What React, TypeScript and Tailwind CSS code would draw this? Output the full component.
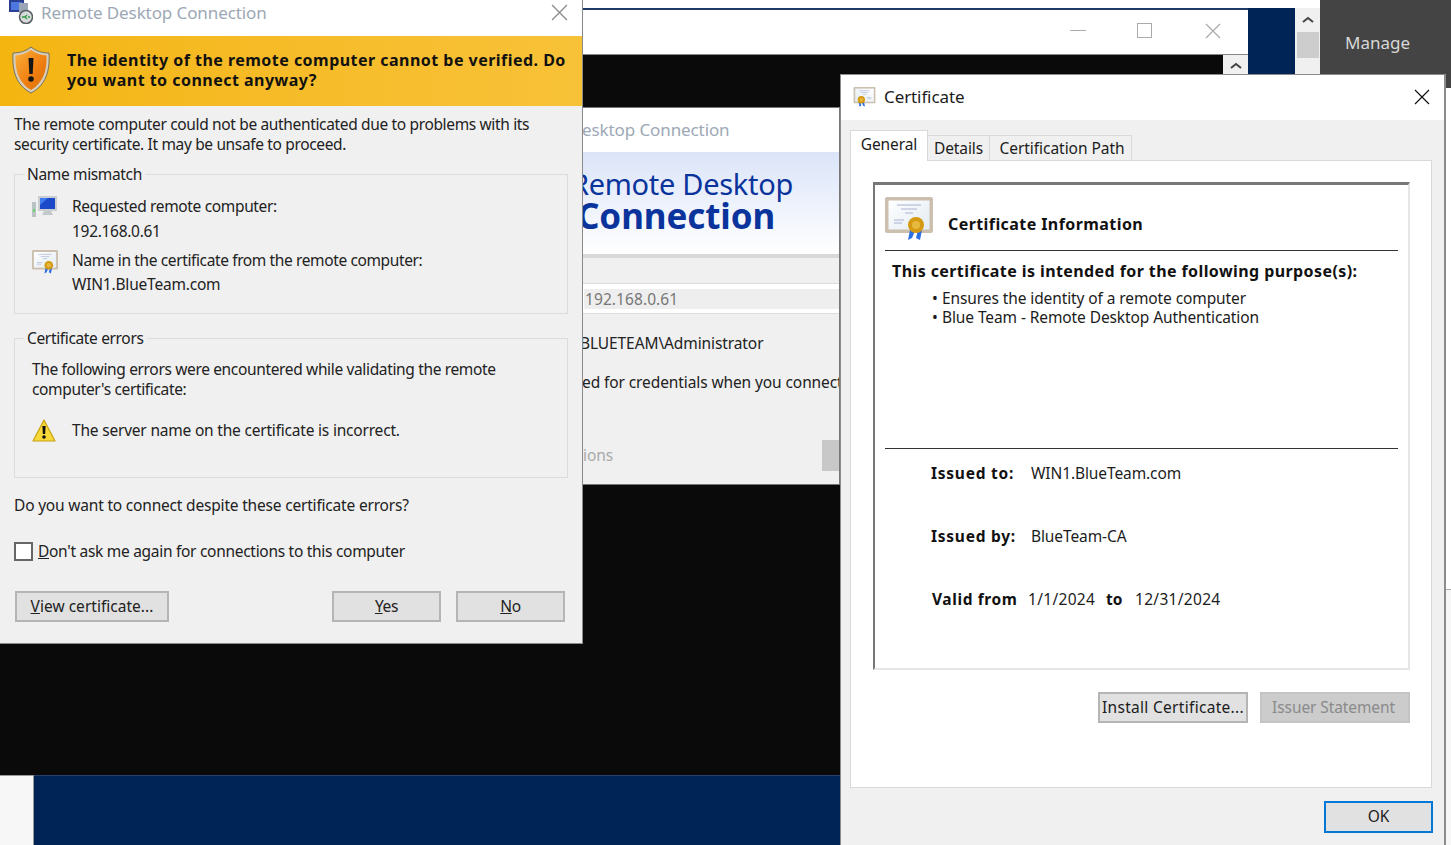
const FONT = "font-['Noto_Sans',sans-serif]";

function RdpIcon() {
  return (
    <svg viewBox="0 0 26 22" className="w-[26px] h-[22px]">
      <rect x="0" y="6" width="4" height="15" fill="#b9c2c4" />
      <rect x="1" y="13" width="2" height="3" fill="#6fd36f" />
      <rect x="6" y="0" width="19" height="15" fill="#c9ced2" />
      <rect x="8" y="2" width="15" height="11" fill="#1c49c9" />
      <path d="M8 2h8l-8 7z" fill="#3f7cf0" />
      <path d="M12 15h7l2 4H10z" fill="#c3c8cb" />
    </svg>
  );
}

function RdpTitleIcon() {
  return (
    <svg viewBox="0 0 24 24" className="w-[24px] h-[24px]">
      <rect x="0" y="0" width="15" height="12" fill="#2a3f8f" />
      <rect x="2" y="2" width="11" height="8" fill="#4d78e0" />
      <rect x="10" y="3" width="9" height="10" fill="#9aa6b8" />
      <circle cx="17" cy="17" r="6.5" fill="#d7dadb" stroke="#5a5f62" strokeWidth="1.5" />
      <path d="M13 17h3M18 15l-2 2 2 2M21 17h-2" stroke="#2d9b3f" strokeWidth="1.4" fill="none" />
    </svg>
  );
}

function CertIcon({ className, id }: { className: string; id: string }) {
  return (
    <svg viewBox="0 0 48 44" className={className}>
      <defs>
        <linearGradient id={id} x1="0" y1="0" x2="1" y2="1">
          <stop offset="0" stopColor="#ffffff" />
          <stop offset="1" stopColor="#e3ebf3" />
        </linearGradient>
      </defs>
      <rect x="0" y="0" width="48" height="36" rx="2" fill="#cbbfae" />
      <rect x="3.500" y="3.500" width="41" height="29" fill={`url(#${id})`} />
      <path d="M12 8h24M16 12h16M20 16h8M9 23h10M9 26h8" stroke="#a7b2cf" strokeWidth="1.2" />
      <path d="M25 33l-2 10 4-2 3-7zM33 33l-2 8 4 2 2-10z" fill="#2c6fe0" />
      <circle cx="31" cy="28" r="8" fill="#d49a12" />
      <circle cx="31" cy="28" r="4" fill="#e8b93f" />
    </svg>
  );
}

function ShieldIcon() {
  return (
    <svg viewBox="0 0 38 48" className="w-[38px] h-[48px]">
      <defs>
        <linearGradient id="shield" x1="0" y1="0" x2="1" y2="1">
          <stop offset="0" stopColor="#fbb03a" />
          <stop offset="0.6" stopColor="#ee7d0f" />
          <stop offset="1" stopColor="#d96f0a" />
        </linearGradient>
      </defs>
      <path d="M19 1c5 4 11 6 18 6 1 18-3 32-18 40C4 39 0 25 1 7c7 0 13-2 18-6z" fill="#d8cdb6" stroke="#77705f" strokeWidth="1" />
      <path d="M19 4c5 3.500 10 5 15.500 5.500C35 25 31 37 19 44 7 37 3 25 3.500 9.500 9 9 14 7.500 19 4z" fill="url(#shield)" />
      <path d="M16.500 12h5l-.8 16h-3.400z" fill="#141414" />
      <circle cx="19" cy="33" r="2.800" fill="#141414" />
    </svg>
  );
}

function WarningIcon() {
  return (
    <svg viewBox="0 0 24 23" className="w-[24px] h-[23px]">
      <path d="M12 1l11 21H1z" fill="#f7d93a" stroke="#c9a012" strokeWidth="1.2" strokeLinejoin="round" />
      <path d="M10.400 7h3.200l-.5 8h-2.200z" fill="#111" />
      <circle cx="12" cy="18" r="1.800" fill="#111" />
    </svg>
  );
}

function CloseIcon({ color, size }: { color: string; size: number }) {
  return (
    <svg viewBox="0 0 16 16" width={size} height={size}>
      <path d="M1 1l14 14M15 1L1 15" stroke={color} strokeWidth="1.2" fill="none" />
    </svg>
  );
}

function Caret() {
  return (
    <svg viewBox="0 0 12 7" className="w-[12px] h-[7px]">
      <path d="M1 6l5-4 5 4" stroke="#444" strokeWidth="2" fill="none" />
    </svg>
  );
}

function GroupBox({ title, className, children }: { title: string; className: string; children: React.ReactNode }) {
  return (
    <fieldset className={`mx-[14px] border border-[#dcdcdc] pl-[17px] ${className}`}>
      <legend className="-ml-[8px] px-[3px] text-[#222] leading-[20px]">{title}</legend>
      {children}
    </fieldset>
  );
}

function LeftDialog() {
  return (
    <div className="absolute left-0 top-0 w-[583px] h-[644px] bg-[#f0f0f0] border-r border-b border-[#8a8a8a] text-[15.5px] tracking-[-0.35px] text-[#222]">
      <div className="h-[36px] bg-white flex items-start pl-[9px] pr-[14px]">
        <RdpTitleIcon />
        <span className="ml-[8px] mt-[1px] leading-[24px] text-[17px] tracking-[-0.1px] text-[#9da8b6] flex-1">Remote Desktop Connection</span>
        <div className="mt-[4px]"><CloseIcon color="#8a8a8a" size={17} /></div>
      </div>
      <div className="h-[70px] bg-gradient-to-r from-[#f4b50f] to-[#f8c238] flex pl-[12px] pt-[10px]">
        <ShieldIcon />
        <p className="ml-[17px] mt-[4px] text-[16px] leading-[20px] font-bold tracking-[0.47px] text-[#111] whitespace-nowrap">
          The identity of the remote computer cannot be verified. Do<br />you want to connect anyway?
        </p>
      </div>
      <p className="px-[14px] mt-[8px] leading-[20px] whitespace-nowrap">
        The remote computer could not be authenticated due to problems with its<br />security certificate. It may be unsafe to proceed.
      </p>
      <GroupBox title="Name mismatch" className="h-[150px] mt-[10px]">
        <div className="flex mt-[12px]">
          <RdpIcon />
          <p className="ml-[14px] -mt-[2px] leading-[25px]">Requested remote computer:<br /><span className="tracking-[-0.3px]">192.168.0.61</span></p>
        </div>
        <div className="flex mt-[6px]">
          <CertIcon id="c1" className="w-[26px] h-[24px]" />
          <p className="ml-[14px] -mt-[2px] leading-[24px]"><span className="tracking-[-0.38px]">Name in the certificate from the remote computer:</span><br /><span className="tracking-[-0.2px]">WIN1.BlueTeam.com</span></p>
        </div>
      </GroupBox>
      <GroupBox title="Certificate errors" className="h-[150px] mt-[14px]">
        <p className="mt-[11px] leading-[20px] whitespace-nowrap">
          The following errors were encountered while validating the remote<br />computer's certificate:
        </p>
        <div className="flex items-center mt-[19px]">
          <WarningIcon />
          <span className="ml-[16px] mt-[1px] tracking-[-0.2px]">The server name on the certificate is incorrect.</span>
        </div>
      </GroupBox>
      <p className="px-[14px] mt-[17px] leading-[20px] tracking-[-0.19px]">Do you want to connect despite these certificate errors?</p>
      <div className="flex items-center pl-[14px] mt-[25px]">
        <span className="w-[19px] h-[19px] bg-white border-2 border-[#666]" />
        <span className="ml-[5px] tracking-[-0.29px]"><u>D</u>on't ask me again for connections to this computer</span>
      </div>
      <div className="flex pl-[15px] pr-[17px] mt-[28px]">
        <button className="w-[154px] h-[31px] bg-[#e1e1e1] border-2 border-[#b5b5b5] tracking-[0.02px]"><u>V</u>iew certificate...</button>
        <button className="ml-auto w-[109px] h-[31px] bg-[#e1e1e1] border-2 border-[#b5b5b5]"><u>Y</u>es</button>
        <button className="ml-[15px] w-[109px] h-[31px] bg-[#e1e1e1] border-2 border-[#b5b5b5]"><u>N</u>o</button>
      </div>
    </div>
  );
}

function MiddleWindow() {
  return (
    <div className="absolute left-[583px] top-[107px] w-[257px] h-[378px] bg-[#f0f0f0] border-y border-r border-[#777] overflow-hidden text-[15.5px] tracking-[-0.1px] text-[#222]">
      <div className="h-[44px] bg-white flex items-center">
        <span className="-ml-[1px] text-[17px] tracking-[-0.1px] text-[#9da8b6] whitespace-nowrap">esktop Connection</span>
      </div>
      <div className="h-[102px] bg-gradient-to-b from-[#dbe4f8] to-white pt-[16px] text-[#0a339c] whitespace-nowrap">
        <p className="-ml-[12px] text-[29px] leading-[32px] tracking-[-0.3px]">Remote Desktop</p>
        <p className="-ml-[6px] text-[35px] leading-[32px] font-bold">Connection</p>
      </div>
      <div className="h-[4px] bg-[#d8d8d8]" />
      <div className="mt-[25px] h-[31px] bg-white border-y border-[#dcdcdc] flex items-center pl-[1px]">
        <span className="w-full bg-[#eeeeee] h-[20px] leading-[20px] text-[#777] pl-[1px] tracking-[0.08px]">192.168.0.61</span>
      </div>
      <p className="mt-[19px] leading-[20px] -ml-[3px] whitespace-nowrap">BLUETEAM\Administrator</p>
      <p className="mt-[19px] leading-[20px] -ml-[1px] whitespace-nowrap">ed for credentials when you connect</p>
      <div className="mt-[48px] flex items-center justify-between h-[31px]">
        <span className="text-[#aaa]">ions</span>
        <span className="w-[17px] h-[31px] bg-[#c8c8c8]" />
      </div>
    </div>
  );
}

function CertDialog() {
  const tabBase = 'h-[26px] bg-[#f0f0f0] border border-[#d9d9d9] flex items-center justify-center';
  const btn = 'w-[150px] h-[31px] border-2 whitespace-nowrap';
  return (
    <div className="absolute left-[840px] top-[74px] w-[606px] h-[771px] bg-[#f0f0f0] border-l border-r-2 border-t border-[#8c8c8c] text-[15.5px] tracking-[-0.1px] text-[#1c1c1c]">
      <div className="h-[45px] bg-white flex items-center pl-[12px] pr-[14px] pb-[2px]">
        <CertIcon id="c2" className="w-[23px] h-[20px] -scale-x-100" />
        <span className="ml-[8px] text-[17px] tracking-[-0.1px] flex-1">Certificate</span>
        <CloseIcon color="#111" size={16} />
      </div>
      <div className="flex items-end h-[41px] pl-[9px] relative z-10">
        <div className="w-[78px] h-[31px] bg-white border border-b-0 border-[#d9d9d9] flex items-center justify-center pb-[2px]">General</div>
        <div className={`${tabBase} w-[63px] -ml-[1px] pt-[1px]`}>Details</div>
        <div className={`${tabBase} w-[143px] -ml-[1px] pt-[1px] pl-[3px] -tracking-[0.05px]`}>Certification Path</div>
      </div>
      <div className="ml-[9px] w-[582px] h-[628px] -mt-[1px] bg-white border border-[#d9d9d9] pt-[21px] pl-[22px]">
        <div className="w-[537px] h-[488px] border-l-2 border-t-[3px] border-r-2 border-b-2 border-l-[#777] border-t-[#777] border-r-[#e6e6e6] border-b-[#e6e6e6] px-[10px]">
          <div className="flex h-[66px] border-b border-[#333] pt-[12px]">
            <CertIcon id="c3" className="w-[48px] h-[44px]" />
            <span className="ml-[15px] mt-[16px] leading-[22px] font-bold text-[16px] tracking-[0.42px] text-[#111]">Certificate Information</span>
          </div>
          <p className="mt-[9px] ml-[7px] font-bold text-[16px] tracking-[0.41px] text-[#111] leading-[22px] whitespace-nowrap">This certificate is intended for the following purpose(s):</p>
          <ul className="ml-[47px] mt-[7px] leading-[19px] tracking-[-0.1px]">
            <li className="flex"><span className="w-[10px]">•</span>Ensures the identity of a remote computer</li>
            <li className="flex"><span className="w-[10px]">•</span>Blue Team - Remote Desktop Authentication</li>
          </ul>
          <div className="mt-[121px] border-t border-[#333] pt-[14px]">
            <div className="flex ml-[46px] h-[22px] items-center">
              <span className="w-[100px] font-bold text-[#111] tracking-[0.75px]">Issued to:</span><span>WIN1.BlueTeam.com</span>
            </div>
            <div className="flex ml-[46px] mt-[41px] h-[22px] items-center">
              <span className="w-[100px] font-bold text-[#111] tracking-[0.75px]">Issued by:</span><span>BlueTeam-CA</span>
            </div>
            <div className="flex ml-[47px] mt-[41px] h-[22px] items-center">
              <span className="w-[96px] font-bold text-[#111] tracking-[0.6px]">Valid from</span>
              <span className="w-[78px] tracking-[0.3px]">1/1/2024</span>
              <span className="w-[29px] font-bold text-[#111]">to</span>
              <span className="tracking-[0.3px]">12/31/2024</span>
            </div>
          </div>
        </div>
        <div className="flex justify-end w-[537px] mt-[22px] gap-[12px]">
          <button className={`${btn} bg-[#e1e1e1] border-[#b5b5b5] tracking-[0.3px]`}>Install Certificate...</button>
          <button className={`${btn} bg-[#cccccc] border-[#c4c4c4] text-[#8a8a8a] pr-[3px]`}>Issuer Statement</button>
        </div>
      </div>
      <div className="flex justify-end pr-[11px] mt-[13px]">
        <button className="w-[109px] h-[32px] bg-[#e1e1e1] border-2 border-[#0078d7]">OK</button>
      </div>
    </div>
  );
}

export default function App() {
  return (
    <div className={`relative w-[1451px] h-[845px] overflow-hidden bg-[#0a0a0a] ${FONT}`}>
      {/* desktop behind the dialogs */}
      <div className="absolute left-[583px] top-0 w-[868px] h-[8px] bg-white" />
      <div className="absolute left-[583px] top-[8px] w-[665px] h-[2px] bg-[#1f3a6b]" />
      <div className="absolute left-[583px] top-[10px] w-[665px] h-[45px] bg-white flex items-center justify-end pr-[27px] gap-[52px] border-b border-[#888] pb-[3px]">
        <span className="w-[16px] h-[1px] bg-[#aaa]" />
        <span className="w-[15px] h-[15px] border border-[#aaa] -ml-[1px] mr-[1px]" />
        <CloseIcon color="#aaa" size={16} />
      </div>
      <div className="absolute left-[1223px] top-[55px] w-[25px] h-[20px] bg-[#f0f0f0] flex justify-center pt-[7px]">
        <Caret />
      </div>
      <div className="absolute left-[1248px] top-[8px] w-[47px] h-[66px] bg-[#012456]" />
      <div className="absolute left-[1295px] top-[8px] w-[25px] h-[66px] bg-[#f0f0f0] flex flex-col items-center pt-[8px]">
        <Caret />
        <span className="mt-[9px] w-[22px] h-[26px] bg-[#cdcdcd]" />
      </div>
      <div className="absolute left-[1320px] top-0 w-[131px] h-[90px] bg-[#444444] text-[#d8d8d8] text-[17px] pl-[25px] pt-[30px]">Manage</div>
      <div className="absolute left-[1446px] top-[88px] w-[5px] h-[502px] bg-white border-b border-[#aaa]" />
      <div className="absolute left-[1446px] top-[590px] w-[5px] h-[255px] bg-[#f7f7f7]" />
      <div className="absolute left-0 top-[775px] w-[840px] h-[70px] bg-[#012456] border-t border-[#2a3f66]" />
      <div className="absolute left-0 top-[775px] w-[34px] h-[70px] bg-[#f7f7f7] border-t border-r border-[#999]" />
      <MiddleWindow />
      <LeftDialog />
      <CertDialog />
    </div>
  );
}
